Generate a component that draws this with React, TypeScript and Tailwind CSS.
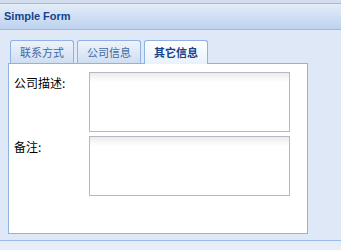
const FONT = { fontFamily: '"Liberation Sans", "Noto Sans CJK SC", sans-serif' }
const CJK = { fontFamily: '"Noto Sans CJK SC", "Liberation Sans", sans-serif' }

const TABS = ['联系方式', '公司信息', '其它信息']
const FIELDS = ['公司描述:', '备注:']

export default function App() {
  const active = 2
  return (
    <div className="flex h-[250px] w-[341px] flex-col overflow-hidden bg-[#dfe8f6]" style={FONT}>
      <div className="h-[3px] bg-[#d3dfee]" />
      {/* title bar */}
      <div className="flex h-[27px] items-center border-y border-[#99bbe8] bg-gradient-to-b from-[#e4edf8] to-[#bcd2ef] px-[4px]">
        <span className="text-[11px] font-bold text-[#15428b]">Simple Form</span>
      </div>

      <div className="flex flex-col pl-[8px] pt-[10px]">
        <div className="flex gap-[3px] pl-[2px]">
          {TABS.map((t, i) => {
            const on = i === active
            return (
              <div
                key={t}
                className={
                  on
                    ? 'relative z-10 -mb-px flex h-[24px] w-[64px] items-center justify-center rounded-t-[3px] border border-b-0 border-[#8db2e3] bg-gradient-to-b from-[#ffffff] to-[#e8f1fd] text-[11px] font-bold text-[#15428b]'
                    : 'flex h-[23px] w-[64px] items-center justify-center rounded-t-[3px] border border-b-0 border-[#8db2e3] bg-gradient-to-b from-[#eef3fb] to-[#d0def2] text-[11px] text-[#416aa3]'
                }
                style={CJK}
              >
                {t}
              </div>
            )
          })}
        </div>
        <div className="flex h-[171px] w-[300px] flex-col gap-[4px] border border-[#8db2e3] bg-white pl-[5px] pt-[8px]">
          {FIELDS.map(f => (
            <div key={f} className="flex">
              <span className="w-[75px] pt-[2px] text-[12px] text-black" style={CJK}>
                {f}
              </span>
              <div className="h-[60px] w-[201px] border border-[#b5b8c8] bg-[linear-gradient(#ececec,#ffffff_9px)]" />
            </div>
          ))}
        </div>
      </div>

      <div className="mt-[6px] h-[2px] border-t border-[#99bbe8] bg-[#e8eef8]" />
      <div className="flex-1 bg-[#e8eef8]" />
    </div>
  )
}
